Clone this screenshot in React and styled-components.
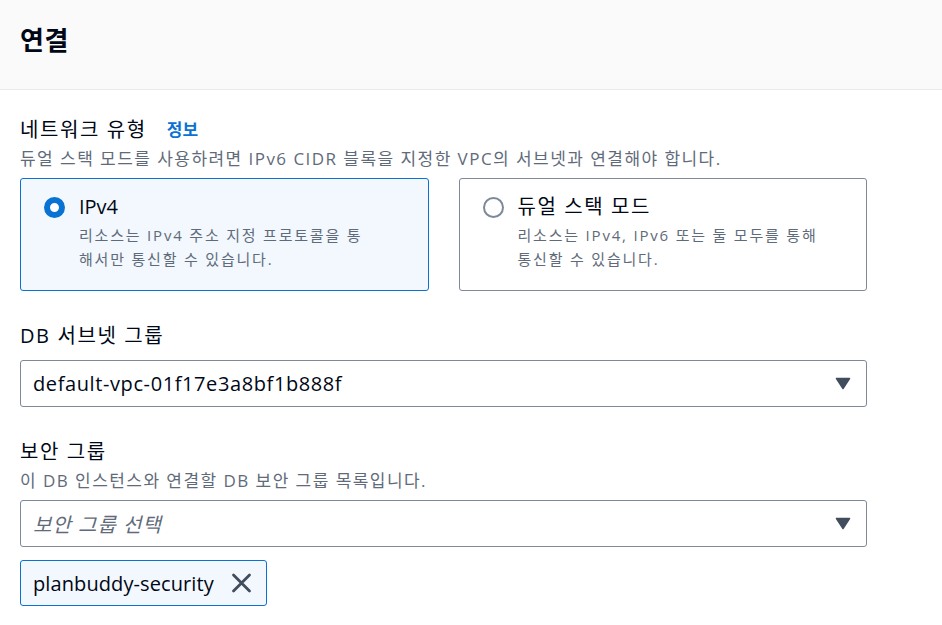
import React from "react";
import styled, { createGlobalStyle } from "styled-components";

const GlobalStyle = createGlobalStyle`
  html, body {
    margin: 0;
    padding: 0;
    background: #ffffff;
  }
  body {
    font-family: "Open Sans", "Noto Sans CJK KR", sans-serif;
    color: #000716;
  }
  * {
    box-sizing: border-box;
  }
`;

const Header = styled.div`
  background: #fafafa;
  border-bottom: 1px solid #e9ebed;
  height: 90px;
  padding: 23px 20px 0 20px;
`;

const Title = styled.h2`
  margin: 0;
  font-size: 26px;
  line-height: 34px;
  font-weight: 700;
  letter-spacing: 0.5px;
  color: #000716;
`;

const Content = styled.div`
  width: 887px;
  padding: 26px 20px 20px 20px;
`;

const Field = styled.div`
  margin-top: ${(p) => (p.first ? "0" : "31px")};
`;

const Label = styled.div`
  display: flex;
  align-items: center;
  gap: 20px;
  font-size: 20px;
  line-height: 28px;
  letter-spacing: 1.6px;
  color: #000716;
`;

const InfoLink = styled.a`
  font-size: 17px;
  font-weight: 700;
  letter-spacing: 0;
  color: #0972d3;
  text-decoration: none;
`;

const Description = styled.div`
  margin-top: 4px;
  font-size: 17px;
  line-height: 22px;
  letter-spacing: 1.45px;
  color: #5f6b7a;
`;

const Tiles = styled.div`
  display: grid;
  grid-template-columns: 1fr 1fr;
  gap: 30px;
  margin-top: 8px;
`;

const Tile = styled.label`
  display: flex;
  align-items: flex-start;
  gap: 14px;
  height: 113px;
  padding: 14px 20px 18px 23px;
  border-radius: 3px;
  border: 1px solid ${(p) => (p.selected ? "#0972d3" : "#7d8998")};
  background: ${(p) => (p.selected ? "#f2f8fd" : "#ffffff")};
`;

const Radio = styled.span`
  flex: none;
  width: 21px;
  height: 21px;
  margin-top: 3.5px;
  border-radius: 50%;
  background: #ffffff;
  border: ${(p) => (p.checked ? "6px solid #0972d3" : "2px solid #7d8998")};
`;

const TileBody = styled.div`
  display: flex;
  flex-direction: column;
`;

const TileTitle = styled.div`
  font-size: 20px;
  line-height: 28px;
  letter-spacing: ${(p) => p.spacing || "0"};
  color: #000716;
`;

const TileText = styled.div`
  margin-top: 2px;
  font-size: 15px;
  line-height: 24px;
  letter-spacing: 1.8px;
  color: #5f6b7a;
`;

const Select = styled.div`
  display: flex;
  align-items: center;
  justify-content: space-between;
  height: 47px;
  margin-top: ${(p) => p.mt || "10px"};
  padding: 0 15px 0 12px;
  border: 1px solid #7d8998;
  border-radius: 3px;
  background: #ffffff;
  font-size: 20px;
  letter-spacing: ${(p) => (p.placeholder ? "1px" : "0.6px")};
  color: ${(p) => (p.placeholder ? "#5f6b7a" : "#000716")};
  font-style: ${(p) => (p.placeholder ? "italic" : "normal")};
`;

const Caret = () => (
  <svg width="16" height="13" viewBox="0 0 16 13">
    <path d="M1.5 1.5 L14.5 1.5 L8 11.5 Z" fill="#414d5c" stroke="#414d5c" strokeWidth="1.5" strokeLinejoin="round" />
  </svg>
);

const Token = styled.div`
  display: inline-flex;
  align-items: center;
  gap: 17px;
  height: 46px;
  margin-top: 13px;
  padding: 0 14px 0 12px;
  border: 1px solid #0972d3;
  border-radius: 3px;
  background: #f2f8fd;
  font-size: 20px;
  letter-spacing: 0.1px;
  color: #000716;
`;

const CloseIcon = () => (
  <svg width="21" height="20" viewBox="0 0 21 20">
    <path d="M2.5 2 L18.5 18 M18.5 2 L2.5 18" stroke="#414d5c" strokeWidth="2.8" strokeLinecap="round" fill="none" />
  </svg>
);

export default function App() {
  return (
    <>
      <GlobalStyle />
      <Header>
        <Title>연결</Title>
      </Header>
      <Content>
        <Field first>
          <Label>
            네트워크 유형 <InfoLink href="#">정보</InfoLink>
          </Label>
          <Description>
            듀얼 스택 모드를 사용하려면 IPv6 CIDR 블록을 지정한 VPC의 서브넷과 연결해야 합니다.
          </Description>
          <Tiles>
            <Tile selected>
              <Radio checked />
              <TileBody>
                <TileTitle>IPv4</TileTitle>
                <TileText>
                  리소스는 IPv4 주소 지정 프로토콜을 통
                  <br />
                  해서만 통신할 수 있습니다.
                </TileText>
              </TileBody>
            </Tile>
            <Tile>
              <Radio />
              <TileBody>
                <TileTitle spacing="1.6px">듀얼 스택 모드</TileTitle>
                <TileText>
                  리소스는 IPv4, IPv6 또는 둘 모두를 통해
                  <br />
                  통신할 수 있습니다.
                </TileText>
              </TileBody>
            </Tile>
          </Tiles>
        </Field>

        <Field>
          <Label>DB 서브넷 그룹</Label>
          <Select>
            <span>default-vpc-01f17e3a8bf1b888f</span>
            <Caret />
          </Select>
        </Field>

        <Field>
          <Label>보안 그룹</Label>
          <Description>이 DB 인스턴스와 연결할 DB 보안 그룹 목록입니다.</Description>
          <Select placeholder mt="8px">
            <span>보안 그룹 선택</span>
            <Caret />
          </Select>
          <Token>
            <span>planbuddy-security</span>
            <CloseIcon />
          </Token>
        </Field>
      </Content>
    </>
  );
}
